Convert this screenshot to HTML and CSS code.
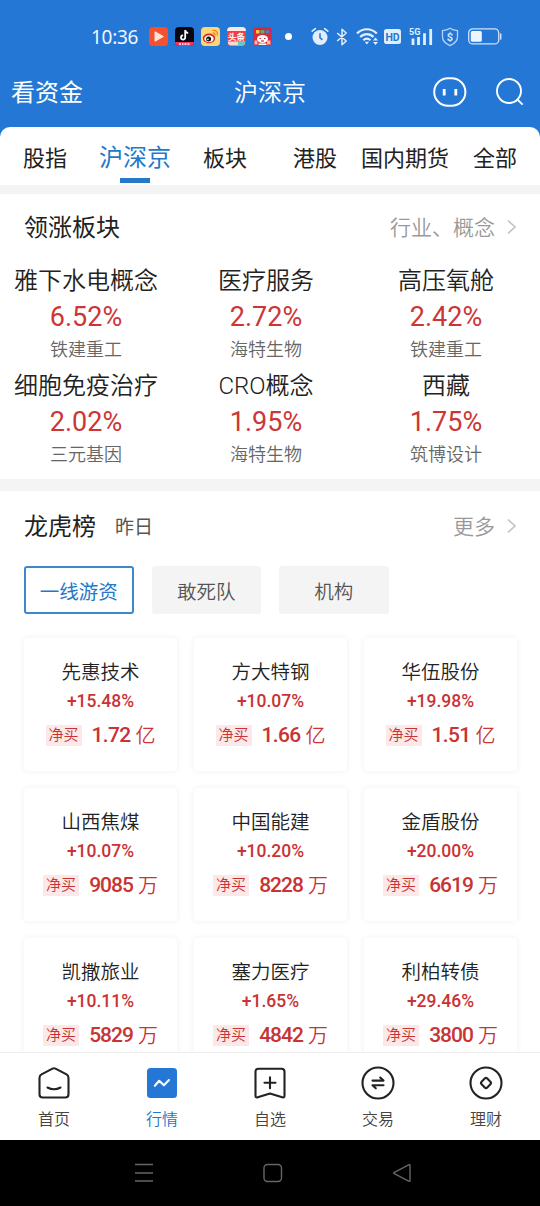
FILE: index.html
```html
<!DOCTYPE html>
<html lang="zh-CN">

<head>
    <meta charset="UTF-8">
    <meta name="viewport" content="width=device-width, initial-scale=1.0">
    <title>沪深京</title>
    <link rel="stylesheet" href="styles.css">
</head>

<body>
    <div class="phone">
        <div class="status-bar">
            <span class="time">10:36</span>
            <div class="app-icons">
                <svg width="19" height="19" viewBox="0 0 19 19">
                    <rect width="19" height="19" rx="4" fill="#f4512c"/>
                    <path d="M6 4.800v9.400l8.400-4.700z" fill="#ffe3da" stroke="#ffe3da" stroke-linejoin="round"/>
                </svg>
                <svg width="19" height="19" viewBox="0 0 19 19">
                    <rect width="19" height="19" rx="4" fill="#0b0712"/>
                    <path d="M0 15h19a4 4 0 0 1-4 4H4a4 4 0 0 1-4-4z" fill="#f4325c"/>
                    <path d="M10.2 3v7.5a2.1 2.1 0 1 1-2.1-2.1M10.2 3.2c.3 1.9 1.3 2.7 3 2.9" fill="none" stroke="#fff" stroke-width="1.8"/>
                    <path d="M4 17h2m1 0h1.5m1 0h2m1 0h2" stroke="#fff" stroke-width="1.3"/>
                </svg>
                <svg width="19" height="19" viewBox="0 0 19 19">
                    <rect width="19" height="19" rx="4" fill="#fbd779"/>
                    <ellipse cx="8" cy="11.4" rx="6.2" ry="4.8" fill="#d8261f"/>
                    <ellipse cx="8" cy="11.8" rx="4.7" ry="3.5" fill="#fff"/>
                    <circle cx="7.6" cy="12" r="2.5" fill="#111"/>
                    <circle cx="6.9" cy="12.4" r=".8" fill="#fff"/>
                    <path d="M12 3.4c3-.4 5 1.8 4.3 4.8M12.2 6c1.4-.2 2.1.7 1.8 2" fill="none" stroke="#f08a1c" stroke-width="1.3" stroke-linecap="round"/>
                </svg>
                <svg width="19" height="19" viewBox="0 0 19 19">
                    <rect width="19" height="19" rx="4" fill="#f04142"/>
                    <path d="M0 4a4 4 0 0 1 4-4h11a4 4 0 0 1 4 4z" fill="#fbe9e4"/>
                    <path d="M1 14.5h17v1a3 3 0 0 1-3 3H4a3 3 0 0 1-3-3z" fill="#f9d9d0"/>
                    <path d="M11 14.5h7v1a3 3 0 0 1-3 3h-4z" fill="#62c9c4"/>
                    <text x="9.5" y="12.6" class="toutiao">头条</text>
                </svg>
                <svg width="19" height="19" viewBox="0 0 19 19">
                    <rect width="19" height="19" rx="4" fill="#d92b3f"/>
                    <path d="M3 2.5h13V7H3z" fill="#b4262f"/>
                    <path d="M3 4.8h3.5" stroke="#f7c844" stroke-width="3.5"/>
                    <path d="M7.5 4.8h4" stroke="#59b56a" stroke-width="3.5"/>
                    <path d="M12.5 4.8H16" stroke="#4b7fd0" stroke-width="3.5"/>
                    <ellipse cx="9.5" cy="12" rx="5.5" ry="4" fill="#fff"/>
                    <path d="M1.5 13.5h3v4h-3zM14 13.5h3.5v4H14z" fill="#f5b9b4"/>
                    <path d="M6.5 11.5H8m3 0h1.5" stroke="#a33" stroke-width="1.2"/>
                    <path d="M8 14h3" stroke="#d92b3f" stroke-width="1.2"/>
                    <path d="M5.5 17.2h8" stroke="#fff" stroke-width="1.5"/>
                </svg>
            </div>
            <span class="dot"></span>
            <svg class="alarm" width="18" height="19" viewBox="0 0 18 19">
                <circle cx="9" cy="10.5" r="7.5" fill="#e3eefc"/>
                <path d="M1.2 4.2l3.200-2.500M16.800 4.200l-3.200-2.500" stroke="#e3eefc" stroke-width="1.6" stroke-linecap="round"/>
                <path d="M9 6.800v4l2 1.600" fill="none" stroke="#2577d5" stroke-width="1.5" stroke-linecap="round"/>
            </svg>
            <svg class="bluetooth" width="12" height="18" viewBox="0 0 12 18">
                <path d="M1.200 5l9 8L6 16.800V1.200L10.200 5l-9 8" fill="none" stroke="#e3eefc" stroke-width="1.5" stroke-linejoin="round"/>
            </svg>
            <svg class="wifi" width="23" height="19" viewBox="0 0 23 19">
                <path d="M1 6.500C6.500.8 15.200.8 20.800 6.500M4.200 10c3.800-3.900 9.600-3.900 13.300 0M7.300 13.200c2.200-2 4.900-2 7.100 0" fill="none" stroke="#e3eefc" stroke-width="2.2"/>
                <path d="M8.800 14.800h4.200l-2.100 2.700z" fill="#e3eefc"/>
                <path d="M17 13.400l2.500-3 2.500 3zM17 15l2.500 3 2.500-3z" fill="#e3eefc"/>
            </svg>
            <svg class="hd" width="17" height="15" viewBox="0 0 17 15">
                <rect width="17" height="15" rx="2.5" fill="#e3eefc"/>
                <text x="8.5" y="11.6" class="hd-text">HD</text>
            </svg>
            <svg class="signal" width="25" height="19" viewBox="0 0 25 19">
                <text x="0" y="8" class="net-text">5G</text>
                <path d="M4 11.500V18M9.500 10v8M15.500 6.200V18M21.700 2v16" stroke="#e3eefc" stroke-width="2.8"/>
            </svg>
            <svg class="shield" width="18" height="20" viewBox="0 0 18 20">
                <path d="M9 1.200c2.300 1.500 4.600 2.200 7.500 2.400v6.200c0 4.200-3.200 7-7.500 8.900-4.300-1.900-7.500-4.700-7.500-8.900V3.600C4.400 3.400 6.700 2.700 9 1.200z" fill="none" stroke="#b9d4f5" stroke-width="1.3"/>
                <text x="9" y="14" class="dollar">$</text>
            </svg>
            <svg class="battery" width="34" height="17" viewBox="0 0 34 17">
                <rect x=".7" y=".9" width="30" height="15" rx="4" fill="none" stroke="#cfe2f9" stroke-width="1.3"/>
                <rect x="2.8" y="3" width="11" height="10.8" rx="1.5" fill="#eef5fd"/>
                <path d="M32.700 6v5" stroke="#cfe2f9" stroke-width="1.5" stroke-linecap="round"/>
            </svg>
        </div>

        <header class="header">
            <span class="header-left">看资金</span>
            <h1>沪深京</h1>
            <div class="header-right">
                <svg width="34" height="30" viewBox="0 0 34 30">
                    <rect x="1.2" y="1.2" width="31.2" height="27.6" rx="13.8" fill="none" stroke="#fff" stroke-width="2"/>
                    <path d="M11.200 12v6.400M22.800 12v6.400" stroke="#fff" stroke-width="2.8"/>
                </svg>
                <svg width="30" height="30" viewBox="0 0 30 30">
                    <circle cx="14" cy="14" r="12" fill="none" stroke="#fff" stroke-width="1.9"/>
                    <path d="M22.300 22.300l5.300 5.300" stroke="#fff" stroke-width="1.9"/>
                </svg>
            </div>
        </header>

        <nav class="tabs">
            <span>股指</span>
            <span class="active">沪深京</span>
            <span>板块</span>
            <span>港股</span>
            <span>国内期货</span>
            <span>全部</span>
        </nav>

        <section class="sectors">
            <div class="section-head">
                <h2>领涨板块</h2>
                <span class="more">行业、概念
                    <svg width="11" height="16" viewBox="0 0 11 16"><path d="M2 1.500L9 8l-7 6.500" fill="none" stroke="#c4c4c4" stroke-width="1.7"/></svg>
                </span>
            </div>
            <div class="sector-grid">
                <div class="sector"><h3>雅下水电概念</h3><b>6.52%</b><p>铁建重工</p></div>
                <div class="sector"><h3>医疗服务</h3><b>2.72%</b><p>海特生物</p></div>
                <div class="sector"><h3>高压氧舱</h3><b>2.42%</b><p>铁建重工</p></div>
                <div class="sector"><h3>细胞免疫治疗</h3><b>2.02%</b><p>三元基因</p></div>
                <div class="sector"><h3>CRO概念</h3><b>1.95%</b><p>海特生物</p></div>
                <div class="sector"><h3>西藏</h3><b>1.75%</b><p>筑博设计</p></div>
            </div>
        </section>

        <section class="rank">
            <div class="section-head">
                <h2>龙虎榜</h2>
                <span class="day">昨日</span>
                <span class="more">更多
                    <svg width="11" height="16" viewBox="0 0 11 16"><path d="M2 1.500L9 8l-7 6.500" fill="none" stroke="#c4c4c4" stroke-width="1.7"/></svg>
                </span>
            </div>
            <div class="filters">
                <button type="button" class="selected">一线游资</button>
                <button type="button">敢死队</button>
                <button type="button">机构</button>
            </div>
            <div class="cards">
                <div class="card"><h3>先惠技术</h3><b>+15.48%</b><p><i>净买</i><em>1.72</em><span>亿</span></p></div>
                <div class="card"><h3>方大特钢</h3><b>+10.07%</b><p><i>净买</i><em>1.66</em><span>亿</span></p></div>
                <div class="card"><h3>华伍股份</h3><b>+19.98%</b><p><i>净买</i><em>1.51</em><span>亿</span></p></div>
                <div class="card"><h3>山西焦煤</h3><b>+10.07%</b><p><i>净买</i><em class="wan">9085</em><span>万</span></p></div>
                <div class="card"><h3>中国能建</h3><b>+10.20%</b><p><i>净买</i><em class="wan">8228</em><span>万</span></p></div>
                <div class="card"><h3>金盾股份</h3><b>+20.00%</b><p><i>净买</i><em class="wan">6619</em><span>万</span></p></div>
                <div class="card"><h3>凯撒旅业</h3><b>+10.11%</b><p><i>净买</i><em class="wan">5829</em><span>万</span></p></div>
                <div class="card"><h3>塞力医疗</h3><b>+1.65%</b><p><i>净买</i><em class="wan">4842</em><span>万</span></p></div>
                <div class="card"><h3>利柏转债</h3><b>+29.46%</b><p><i>净买</i><em class="wan">3800</em><span>万</span></p></div>
            </div>
        </section>

        <nav class="bottom-nav">
            <div>
                <svg width="34" height="34" viewBox="0 0 34 34">
                    <path d="M15.500 2.600L4.500 8.400Q2.500 9.500 2.500 12v16.200q0 3.300 3.300 3.300h22.400q3.300 0 3.300-3.300V12q0-2.500-2-3.600L18.500 2.600q-1.500-.8-3 0zM10.500 21.500q6.500 3.600 13 0" class="line"/>
                </svg>
                首页
            </div>
            <div class="active">
                <svg width="34" height="34" viewBox="0 0 34 34">
                    <rect x="2" y="2" width="30" height="30" rx="3.5" fill="#2577d5"/>
                    <path d="M9.800 19.800l4.400-5 4.700 4.400 5.100-5.200" fill="none" stroke="#fff" stroke-width="2.1" stroke-linecap="round" stroke-linejoin="round"/>
                </svg>
                行情
            </div>
            <div>
                <svg width="34" height="34" viewBox="0 0 34 34">
                    <path d="M5.500 2.700h23q3 0 3 3v24q0 2.300-2.200 1.600L17 27.500 4.700 31.300q-2.200.7-2.200-1.600v-24q0-3 3-3zM17 11.200v11M11.500 16.700h11" class="line"/>
                </svg>
                自选
            </div>
            <div>
                <svg width="34" height="34" viewBox="0 0 34 34">
                    <circle cx="17" cy="17" r="15.5" class="line"/>
                    <path d="M11.500 14.600h11L19.200 11.500M22.500 19.200h-11l3.300 3.100" class="line"/>
                </svg>
                交易
            </div>
            <div>
                <svg width="34" height="34" viewBox="0 0 34 34">
                    <circle cx="17" cy="17" r="15.5" class="line"/>
                    <rect x="13" y="13" width="8" height="8" rx="1.8" transform="rotate(45 17 17)" class="line"/>
                </svg>
                理财
            </div>
        </nav>

        <div class="system-bar">
            <svg width="20" height="20" viewBox="0 0 20 20"><path d="M1 1.500h18M1 10h18M1 18h18"/></svg>
            <svg width="20" height="20" viewBox="0 0 20 20"><rect x="1" y="1.5" width="17.5" height="17" rx="3.5"/></svg>
            <svg width="20" height="20" viewBox="0 0 20 20"><path d="M18 2.200v15.600q0 .9-.9.500L2.300 10.700q-1.200-.7 0-1.400L17.100 1.700q.9-.4.900.5z"/></svg>
        </div>
    </div>
</body>

</html>
```

FILE: styles.css
```css
* {
    box-sizing: border-box;
}

body {
    margin: 0;
    background: #000;
    font-family: Roboto, "Noto Sans CJK SC", sans-serif;
    color: #222;
}

h1,
h2,
h3,
p {
    margin: 0;
    font-weight: 350;
}

svg {
    display: block;
    flex: none;
}

.phone {
    width: 540px;
    height: 1206px;
    display: flex;
    flex-direction: column;
    overflow: hidden;
    background: #2577d5;
}

/* status bar */
.status-bar {
    display: flex;
    align-items: center;
    height: 60px;
    padding: 13px 0 0 91px;
}

.time {
    width: 58px;
    font: 400 19px/24px "Noto Sans", sans-serif;
    letter-spacing: -0.3px;
    color: #f0f6fe;
}

.app-icons {
    display: flex;
    gap: 7px;
}

.toutiao {
    font: 700 8.5px "Noto Sans CJK SC", sans-serif;
    fill: #fff;
    text-anchor: middle;
}

.dot {
    width: 7px;
    height: 7px;
    margin: 0 19px 0 13px;
    border-radius: 50%;
    background: #fff;
}

.bluetooth {
    margin-left: 7px;
}

.wifi {
    margin-left: 8px;
}

.hd {
    margin-left: 5px;
}

.hd-text {
    font: 700 10.5px Roboto, sans-serif;
    fill: #2577d5;
    text-anchor: middle;
}

.signal {
    margin-left: 8px;
}

.net-text {
    font: 700 9px Roboto, sans-serif;
    fill: #e3eefc;
}

.shield {
    margin-left: 7px;
}

.dollar {
    font: 700 11px Roboto, sans-serif;
    fill: #cfe2f9;
    text-anchor: middle;
}

.battery {
    margin-left: 9px;
}

/* header */
.header {
    display: grid;
    grid-template-columns: 1fr auto 1fr;
    align-items: center;
    height: 67px;
    padding: 0 15px 3px 11px;
    font-size: 24px;
    color: #fff;
}

.header-left,
.header h1 {
    padding-bottom: 3px;
    font-weight: 400;
}

.header h1 {
    padding-left: 4px;
    font-size: 24px;
    font-weight: 350;
}

.header-right {
    display: flex;
    align-items: center;
    justify-content: flex-end;
    gap: 28px;
}

/* market tabs */
.tabs {
    display: grid;
    grid-template-columns: repeat(6, 90px);
    height: 58px;
    border-radius: 10px 10px 0 0;
    background: #fff;
    font-size: 22px;
    font-weight: 400;
    line-height: 63px;
    text-align: center;
    white-space: nowrap;
}

.tabs .active {
    display: flex;
    flex-direction: column;
    align-items: center;
    font-size: 24px;
    color: #2577c8;
}

.tabs .active::after {
    content: "";
    width: 30px;
    height: 5px;
    margin-top: -12px;
    background: #2577c8;
}

/* leading sectors */
.sectors {
    height: 294px;
    border-top: 9px solid #f4f4f4;
    background: #fff;
}

.section-head {
    display: flex;
    align-items: center;
    height: 66px;
    padding: 0 23px 0 24px;
}

.section-head h2 {
    padding-bottom: 3px;
    font-size: 24px;
    font-weight: 400;
}

.more {
    display: flex;
    align-items: center;
    gap: 11px;
    margin-left: auto;
    padding-bottom: 2px;
    font-size: 21px;
    font-weight: 350;
    color: #999;
}

.more svg {
    margin-top: 2px;
}

.sector-grid {
    display: grid;
    grid-template-columns: repeat(3, 180px);
    grid-auto-rows: 105px;
    margin-left: -4px;
    text-align: center;
}

.sector h3 {
    padding-top: 2px;
    font-size: 24px;
    line-height: 38px;
}

.sector b {
    display: block;
    font-size: 27px;
    font-weight: 400;
    line-height: 34px;
    color: #cd3636;
}

.sector p {
    font-size: 18px;
    line-height: 32px;
    color: #666;
}

/* rank list */
.rank {
    flex: 1;
    min-height: 0;
    overflow: hidden;
    border-top: 12px solid #f4f4f4;
    background: #fff;
}

.rank .section-head {
    height: 70px;
}

.day {
    margin-left: 19px;
    padding-bottom: 2px;
    font-size: 19px;
    color: #555;
}

.filters {
    display: flex;
    gap: 18px;
    padding: 5px 24px 24px;
}

.filters button {
    width: 109.5px;
    height: 48px;
    padding: 0;
    border: 0;
    border-radius: 3px;
    background: #f4f4f4;
    font-family: inherit;
    font-size: 19.5px;
    font-weight: 350;
    color: #555;
}

.filters .selected {
    border: 2px solid #3f87cd;
    background: #fff;
    font-weight: 400;
    color: #2577c8;
}

.cards {
    display: grid;
    grid-template-columns: repeat(3, 153px);
    grid-auto-rows: 133px;
    gap: 17px;
    padding: 0 24px;
}

.card {
    padding-top: 17px;
    border-radius: 4px;
    box-shadow: 0 0 6px rgba(60, 40, 90, 0.07);
    text-align: center;
}

.card h3 {
    padding-top: 2px;
    font-size: 19.5px;
    line-height: 31px;
}

.card b {
    display: block;
    font-size: 17.5px;
    font-weight: 500;
    line-height: 27px;
    color: #c93333;
}

.card p {
    display: flex;
    align-items: center;
    justify-content: center;
    height: 40px;
    font-size: 20px;
    color: #c93333;
}

.card p span {
    margin-left: 5px;
    padding-bottom: 2px;
}

.card i {
    height: 21px;
    margin-right: 10px;
    padding: 0 3px;
    background: #fce8e8;
    font-size: 15px;
    font-style: normal;
    line-height: 20px;
}

.card em {
    font-size: 21px;
    font-style: normal;
    font-weight: 500;
    letter-spacing: -0.7px;
}

.card .wan {
    letter-spacing: -1px;
}

/* bottom navigation */
.bottom-nav {
    display: grid;
    grid-template-columns: repeat(5, 108px);
    height: 88px;
    padding-top: 13px;
    border-top: 1px solid #eee;
    background: #fff;
    font-size: 16px;
    font-weight: 350;
    color: #444;
}

.bottom-nav div {
    display: flex;
    flex-direction: column;
    align-items: center;
    gap: 7px;
    line-height: 25px;
}

.bottom-nav .active {
    color: #2577c8;
}

.line {
    fill: none;
    stroke: #222;
    stroke-width: 2.1;
    stroke-linecap: round;
    stroke-linejoin: round;
}

/* android system bar */
.system-bar {
    display: flex;
    align-items: center;
    justify-content: center;
    gap: 109px;
    height: 66px;
    padding-left: 6px;
    background: #000;
}

.system-bar svg {
    fill: none;
    stroke: #666;
    stroke-width: 1.4;
}
```
